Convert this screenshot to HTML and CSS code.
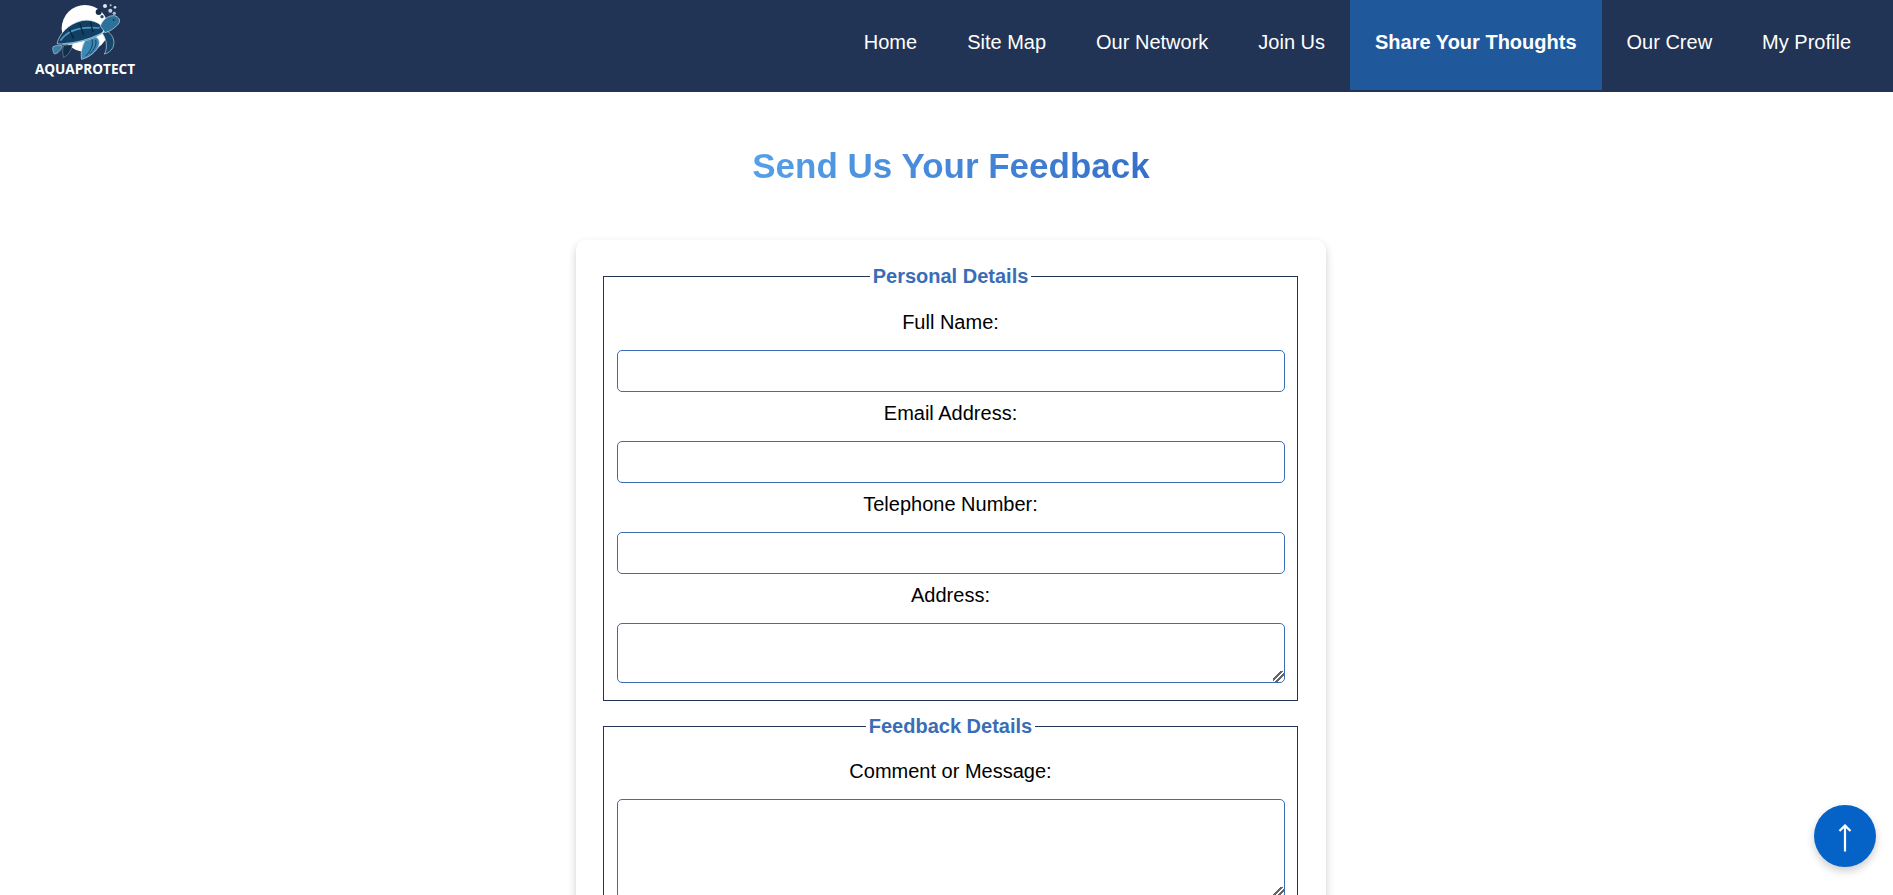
FILE: index.html
```html
<!DOCTYPE html>
<html lang="en">
<head>
    <meta charset="UTF-8">
    <meta name="viewport" content="width=device-width, initial-scale=1.0">
    <title>Send Us Your Feedback</title>
    <link rel="stylesheet" href="styles.css">
</head>
<body>
    <!-- Site header -->
    <header class="site-header">
        <a class="logo" href="#">
            <svg class="logo-mark" viewBox="0 0 360 186" aria-hidden="true">
                <circle cx="180" cy="85" r="70" fill="#ffffff"/>
                <circle cx="221" cy="36" r="9" fill="#12304e"/>
                <circle cx="231" cy="50" r="5" fill="#1d4a70"/>
                <circle cx="240" cy="18" r="6" fill="#dfe8ef"/>
                <circle cx="257" cy="16" r="3" fill="#b9c9d8"/>
                <circle cx="270" cy="22" r="4" fill="#cfdbe5"/>
                <circle cx="256" cy="32" r="6" fill="#c3d2df"/>
                <circle cx="268" cy="40" r="5" fill="#a9bfd1"/>
                <!-- flippers -->
                <path d="M84 140 C98 134 108 134 112 138 C108 150 100 160 88 162 C84 156 82 148 84 140 Z" fill="#3d7ea6" stroke="#b9c9d6" stroke-width="2"/>
                <path d="M116 136 L142 134 C140 150 130 166 116 172 C112 160 112 148 116 136 Z" fill="#10304c" stroke="#8aa3b8" stroke-width="1.5"/>
                <path d="M244 92 C262 102 272 122 264 142 C258 154 248 160 238 162 C248 146 246 120 232 100 Z" fill="#14486f" stroke="#c8d5e0" stroke-width="2"/>
                <path d="M192 106 C212 104 228 118 222 136 C214 156 192 172 170 178 C166 160 170 130 192 106 Z" fill="#3a88b3" stroke="#d5e0e8" stroke-width="2"/>
                <path d="M200 116 C206 132 200 150 182 168 M212 120 C216 134 208 148 194 162" fill="none" stroke="#123f60" stroke-width="3"/>
                <!-- shell -->
                <path d="M96 130 C104 100 130 72 170 62 C198 56 226 68 238 88 C232 104 206 118 172 124 C146 130 118 136 96 130 Z" fill="#123f64" stroke="#d5e0e8" stroke-width="2"/>
                <path d="M106 122 C126 92 160 78 224 84" fill="none" stroke="#4f97bf" stroke-width="5"/>
                <path d="M132 86 L146 116 M164 70 L176 106 M196 66 L204 96" fill="none" stroke="#0a263e" stroke-width="4"/>
                <path d="M112 132 C146 130 190 120 230 100" fill="none" stroke="#7cb6d6" stroke-width="4"/>
                <!-- head -->
                <path d="M226 78 C232 60 248 46 268 47 C282 50 288 62 280 72 C270 84 256 94 240 98 Z" fill="#2b7199" stroke="#d5e0e8" stroke-width="2"/>
                <circle cx="266" cy="60" r="2.5" fill="#081c2e"/>
            </svg>
            <span class="logo-name">AQUAPROTECT</span>
        </a>
        <nav class="main-nav">
            <a href="#">Home</a>
            <a href="#">Site Map</a>
            <a href="#">Our Network</a>
            <a href="#">Join Us</a>
            <a href="#" class="active">Share Your Thoughts</a>
            <a href="#">Our Crew</a>
            <a href="#">My Profile</a>
        </nav>
    </header>

    <main class="page">
        <h1 class="page-title">Send Us Your Feedback</h1>

        <form class="feedback-form">
            <fieldset>
                <legend>Personal Details</legend>
                <label for="fullName">Full Name:</label>
                <input type="text" id="fullName" name="fullName">

                <label for="email">Email Address:</label>
                <input type="text" id="email" name="email">

                <label for="phone">Telephone Number:</label>
                <input type="text" id="phone" name="phone">

                <label for="address">Address:</label>
                <textarea id="address" name="address"></textarea>
            </fieldset>

            <fieldset class="feedback-details">
                <legend>Feedback Details</legend>
                <label for="message">Comment or Message:</label>
                <textarea id="message" name="message" class="tall"></textarea>
            </fieldset>
        </form>
    </main>

    <a class="to-top" href="#" aria-label="Back to top">
        <svg viewBox="0 0 14 28" aria-hidden="true">
            <path d="M7 27.5 V1.5 M1.5 7 L7 1.5 L12.5 7" fill="none" stroke="#ffffff" stroke-width="2.2"/>
        </svg>
    </a>
</body>
</html>
```

FILE: styles.css
```css
html, body {
    height: 100%;
    overflow: hidden;
}

body {
    margin: 0;
    font-family: "Liberation Sans", Arial, sans-serif;
    background-color: #fff;
    color: #000;
}

.site-header {
    display: flex;
    justify-content: space-between;
    height: 92px;
    padding: 0 17px 0 25px;
    background-color: #213455;
}

.logo {
    display: flex;
    flex-direction: column;
    align-items: center;
    width: 120px;
    text-decoration: none;
}

.logo-mark {
    display: block;
    width: 120px;
    height: 62px;
    flex: none;
}

.logo-name {
    color: #fff;
    font-size: 13.6px;
    font-weight: bold;
    font-family: "Open Sans", sans-serif;
    line-height: 14px;
    white-space: nowrap;
}

.main-nav {
    display: flex;
    height: 90px;
}

.main-nav a {
    padding: 31px 25px 0;
    color: #fff;
    font-size: 20px;
    line-height: 23px;
    text-decoration: none;
}

.main-nav a.active {
    background-color: #20589c;
    font-weight: bold;
}

.page {
    padding-left: 9px;
}

.page-title {
    width: fit-content;
    margin: 54px auto 0;
    font-size: 35px;
    line-height: 40px;
    font-weight: bold;
    background: linear-gradient(90deg, #55a0e8, #3670c8);
    -webkit-background-clip: text;
    background-clip: text;
    color: transparent;
}

.feedback-form {
    width: 750px;
    box-sizing: border-box;
    margin: 54px auto 0;
    padding: 25px 28px 25px 27px;
    background-color: #fff;
    border-radius: 10px;
    box-shadow: 0 4px 8px rgba(0, 0, 0, 0.2);
}

fieldset {
    margin: 0 0 14px;
    padding: 13px 13px 17px;
    border: 1px solid #213455;
    text-align: center;
}

.feedback-details {
    padding-top: 12px;
}

legend {
    padding: 0 3px;
    color: #3a6db5;
    font-size: 20px;
    line-height: 23px;
    font-weight: bold;
}

label {
    display: block;
    margin: 10px 0 16px;
    font-size: 20px;
    line-height: 23px;
}

input[type="text"], textarea {
    display: block;
    width: calc(100% + 1px);
    box-sizing: border-box;
    margin: 0;
    border: 1px solid #3a6db5;
    border-radius: 5px;
    font-family: inherit;
    font-size: 16px;
}

input[type="text"] {
    height: 42px;
}

textarea {
    height: 60px;
}

textarea.tall {
    height: 100px;
}

textarea::-webkit-resizer {
    background: linear-gradient(135deg, transparent 36%, #666 36% 46%, transparent 46% 59%, #666 59% 69%, transparent 69%) no-repeat right bottom / 11px 11px;
}

.to-top {
    position: fixed;
    right: 17px;
    bottom: 28px;
    display: flex;
    align-items: center;
    justify-content: center;
    width: 62px;
    height: 62px;
    border-radius: 50%;
    background-color: #0563c8;
    box-shadow: 0 4px 8px rgba(0, 0, 0, 0.2);
}

.to-top svg {
    width: 14px;
    height: 28px;
    margin-top: 4px;
}
```
